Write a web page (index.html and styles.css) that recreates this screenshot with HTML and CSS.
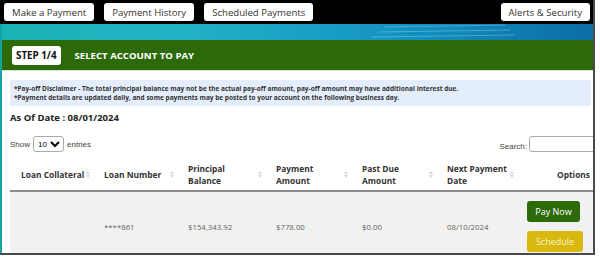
FILE: index.html
```html
<!DOCTYPE html>
<html lang="en">
<head>
  <meta charset="UTF-8">
  <meta name="viewport" content="width=device-width, initial-scale=1.0">
  <title>Make a Payment - Select Account</title>
<link rel="stylesheet" href="styles.css">
</head>
<body>
  <div class="frame">
    <div class="topbar">
      <button class="tab">Make a Payment</button>
      <button class="tab">Payment History</button>
      <button class="tab">Scheduled Payments</button>
      <button class="tab alerts">Alerts &amp; Security</button>
    </div>

    <div class="content">
      <div class="banner">
        <svg class="banner-lines" width="600" height="16" viewBox="0 0 600 16">
          <line x1="385" y1="3" x2="505" y2="1" />
          <line x1="378" y1="8" x2="510" y2="6" />
          <line x1="372" y1="13" x2="515" y2="11" />
        </svg>
      </div>

      <div class="step-bar">
        <span class="step">STEP 1/4</span>
        <span class="step-title">SELECT ACCOUNT TO PAY</span>
      </div>

      <div class="panel">
        <div class="disclaimer">
          <p>*Pay-off Disclaimer - The total principal balance may not be the actual pay-off amount, pay-off amount may have additional interest due.</p>
          <p>*Payment details are updated daily, and some payments may be posted to your account on the following business day.</p>
        </div>

        <h3 class="as-of">As Of Date : 08/01/2024</h3>

        <div class="table-tools">
          <label>Show<select>
              <option>10</option>
              <option>25</option>
              <option>50</option>
            </select>entries</label>
          <label>Search:<input type="text" /></label>
        </div>

        <table class="loans">
          <thead>
            <tr>
              <th class="c1">Loan Collateral<span class="sort"></span></th>
              <th class="c2">Loan Number<span class="sort"></span></th>
              <th class="c3">Principal<br>Balance<span class="sort"></span></th>
              <th class="c4">Payment<br>Amount<span class="sort"></span></th>
              <th class="c5">Past Due<br>Amount<span class="sort"></span></th>
              <th class="c6">Next Payment<br>Date<span class="sort"></span></th>
              <th class="options">Options</th>
            </tr>
          </thead>
          <tbody>
            <tr>
              <td></td>
              <td>****861</td>
              <td>$154,343.92</td>
              <td>$778.00</td>
              <td>$0.00</td>
              <td>08/10/2024</td>
              <td class="options">
                <button class="btn pay">Pay Now</button>
                <button class="btn schedule">Schedule</button>
              </td>
            </tr>
          </tbody>
        </table>
      </div>
    </div>
  </div>
</body>
</html>
```

FILE: styles.css
```css
body {
  margin: 0;
  background-color: #ffffff;
  font-family: "Open Sans", Arial, sans-serif;
  color: #333;
}
.frame {
  width: 595px;
  height: 255px;
  box-sizing: border-box;
  border-right: 2px solid #4a4a4a;
  border-bottom: 2px solid #4a4a4a;
  overflow: hidden;
}
.topbar {
  height: 24px;
  background-color: #000;
  display: flex;
  align-items: center;
  padding: 0 3px 0 4px;
  gap: 10px;
}
.tab {
  height: 18px;
  padding: 0 8px;
  background-color: #fff;
  border: none;
  border-radius: 3px;
  font-family: "Open Sans", Arial, sans-serif;
  font-size: 9.6px;
  color: #333;
  cursor: pointer;
}
.tab.alerts {
  margin-left: auto;
}
.content {
  border-left: 2px solid #13a3a3;
}
.banner {
  height: 16px;
  background: linear-gradient(90deg, #1ab4b6 0%, #22b2c4 30%, #1ba1c6 50%, #1190c0 70%, #0b6ea6 100%);
  overflow: hidden;
}
.banner-lines {
  display: block;
  margin-left: -2px;
}
.banner-lines line {
  stroke: rgba(255, 255, 255, 0.25);
  stroke-width: 1;
}
.step-bar {
  height: 30px;
  background-color: #2c6a08;
  display: flex;
  align-items: center;
  padding-left: 10px;
  border-bottom: 1px solid #d8e4d0;
}
.step {
  background-color: #fff;
  color: #111;
  font-weight: 700;
  font-size: 9.8px;
  height: 19px;
  line-height: 19px;
  padding: 0 4px;
  border-radius: 3px;
}
.step-title {
  margin-left: 14px;
  color: #fff;
  font-weight: 700;
  font-size: 9.6px;
}
.panel {
  padding: 9px 0 0 8px;
}
.disclaimer {
  background-color: #e4edfb;
  padding: 4px 4px;
  margin-right: 2px;
}
.disclaimer p {
  margin: 0;
  font-size: 6.5px;
  line-height: 9px;
  font-weight: 700;
  color: #333;
}
.as-of {
  margin: 5px 0 0;
  font-size: 9.5px;
  line-height: 14px;
  font-weight: 700;
  color: #222;
}
.table-tools {
  display: flex;
  justify-content: space-between;
  align-items: center;
  margin-top: 11px;
  font-family: "Liberation Sans", Arial, sans-serif;
  font-size: 8px;
  color: #444;
}
.table-tools select {
  width: 31px;
  height: 16px;
  margin: 0 3px 0 3px;
  font-size: 8px;
  padding: 0;
  border: 1px solid #aaa;
  border-radius: 3px;
  background-color: #fff;
}
.table-tools input {
  width: 80px;
  height: 16px;
  box-sizing: border-box;
  margin-left: 2px;
  margin-right: -16px;
  border: 1px solid #aaa;
  border-radius: 3px;
}
.loans {
  margin-top: 8px;
  width: 584px;
  border-collapse: collapse;
  table-layout: fixed;
}
.loans th {
  position: relative;
  height: 30px;
  padding: 0 0 0 11px;
  text-align: left;
  font-size: 8.4px;
  line-height: 12px;
  font-weight: 700;
  color: #333;
  border-bottom: 2px solid #8c8c8c;
}
.loans th.c1 { width: 72px; }
.loans th.c2 { width: 73px; }
.loans th.c3 { width: 77px; }
.loans th.c4 { width: 75px; }
.loans th.c5 { width: 74px; }
.loans th.c6 { width: 70px; }
.loans th.options {
  text-align: right;
  padding-right: 4px;
}
.sort {
  position: absolute;
  right: 3px;
  top: 11px;
  width: 0;
  height: 0;
  border-left: 2px solid transparent;
  border-right: 2px solid transparent;
  border-bottom: 3px solid #d8d8d8;
}
.sort::after {
  content: "";
  position: absolute;
  left: -2px;
  top: 4px;
  border-left: 2px solid transparent;
  border-right: 2px solid transparent;
  border-top: 3px solid #d8d8d8;
}
.loans tbody tr {
  background-color: #f1f1f1;
}
.loans td {
  padding: 0 0 0 11px;
  height: 60px;
  font-size: 7.8px;
  color: #666;
}
.loans td.options {
  padding: 4px 0 5px 10px;
}
.btn {
  display: block;
  height: 21px;
  border: none;
  border-radius: 3px;
  font-family: "Open Sans", Arial, sans-serif;
  font-size: 9px;
  padding: 0 4px;
  cursor: pointer;
}
.btn.pay {
  background-color: #2d6a0a;
  color: #fff;
  width: 53px;
}
.btn.schedule {
  margin-top: 9px;
  background-color: #d9b90f;
  color: #f8f2c4;
  width: 56px;
}
```
